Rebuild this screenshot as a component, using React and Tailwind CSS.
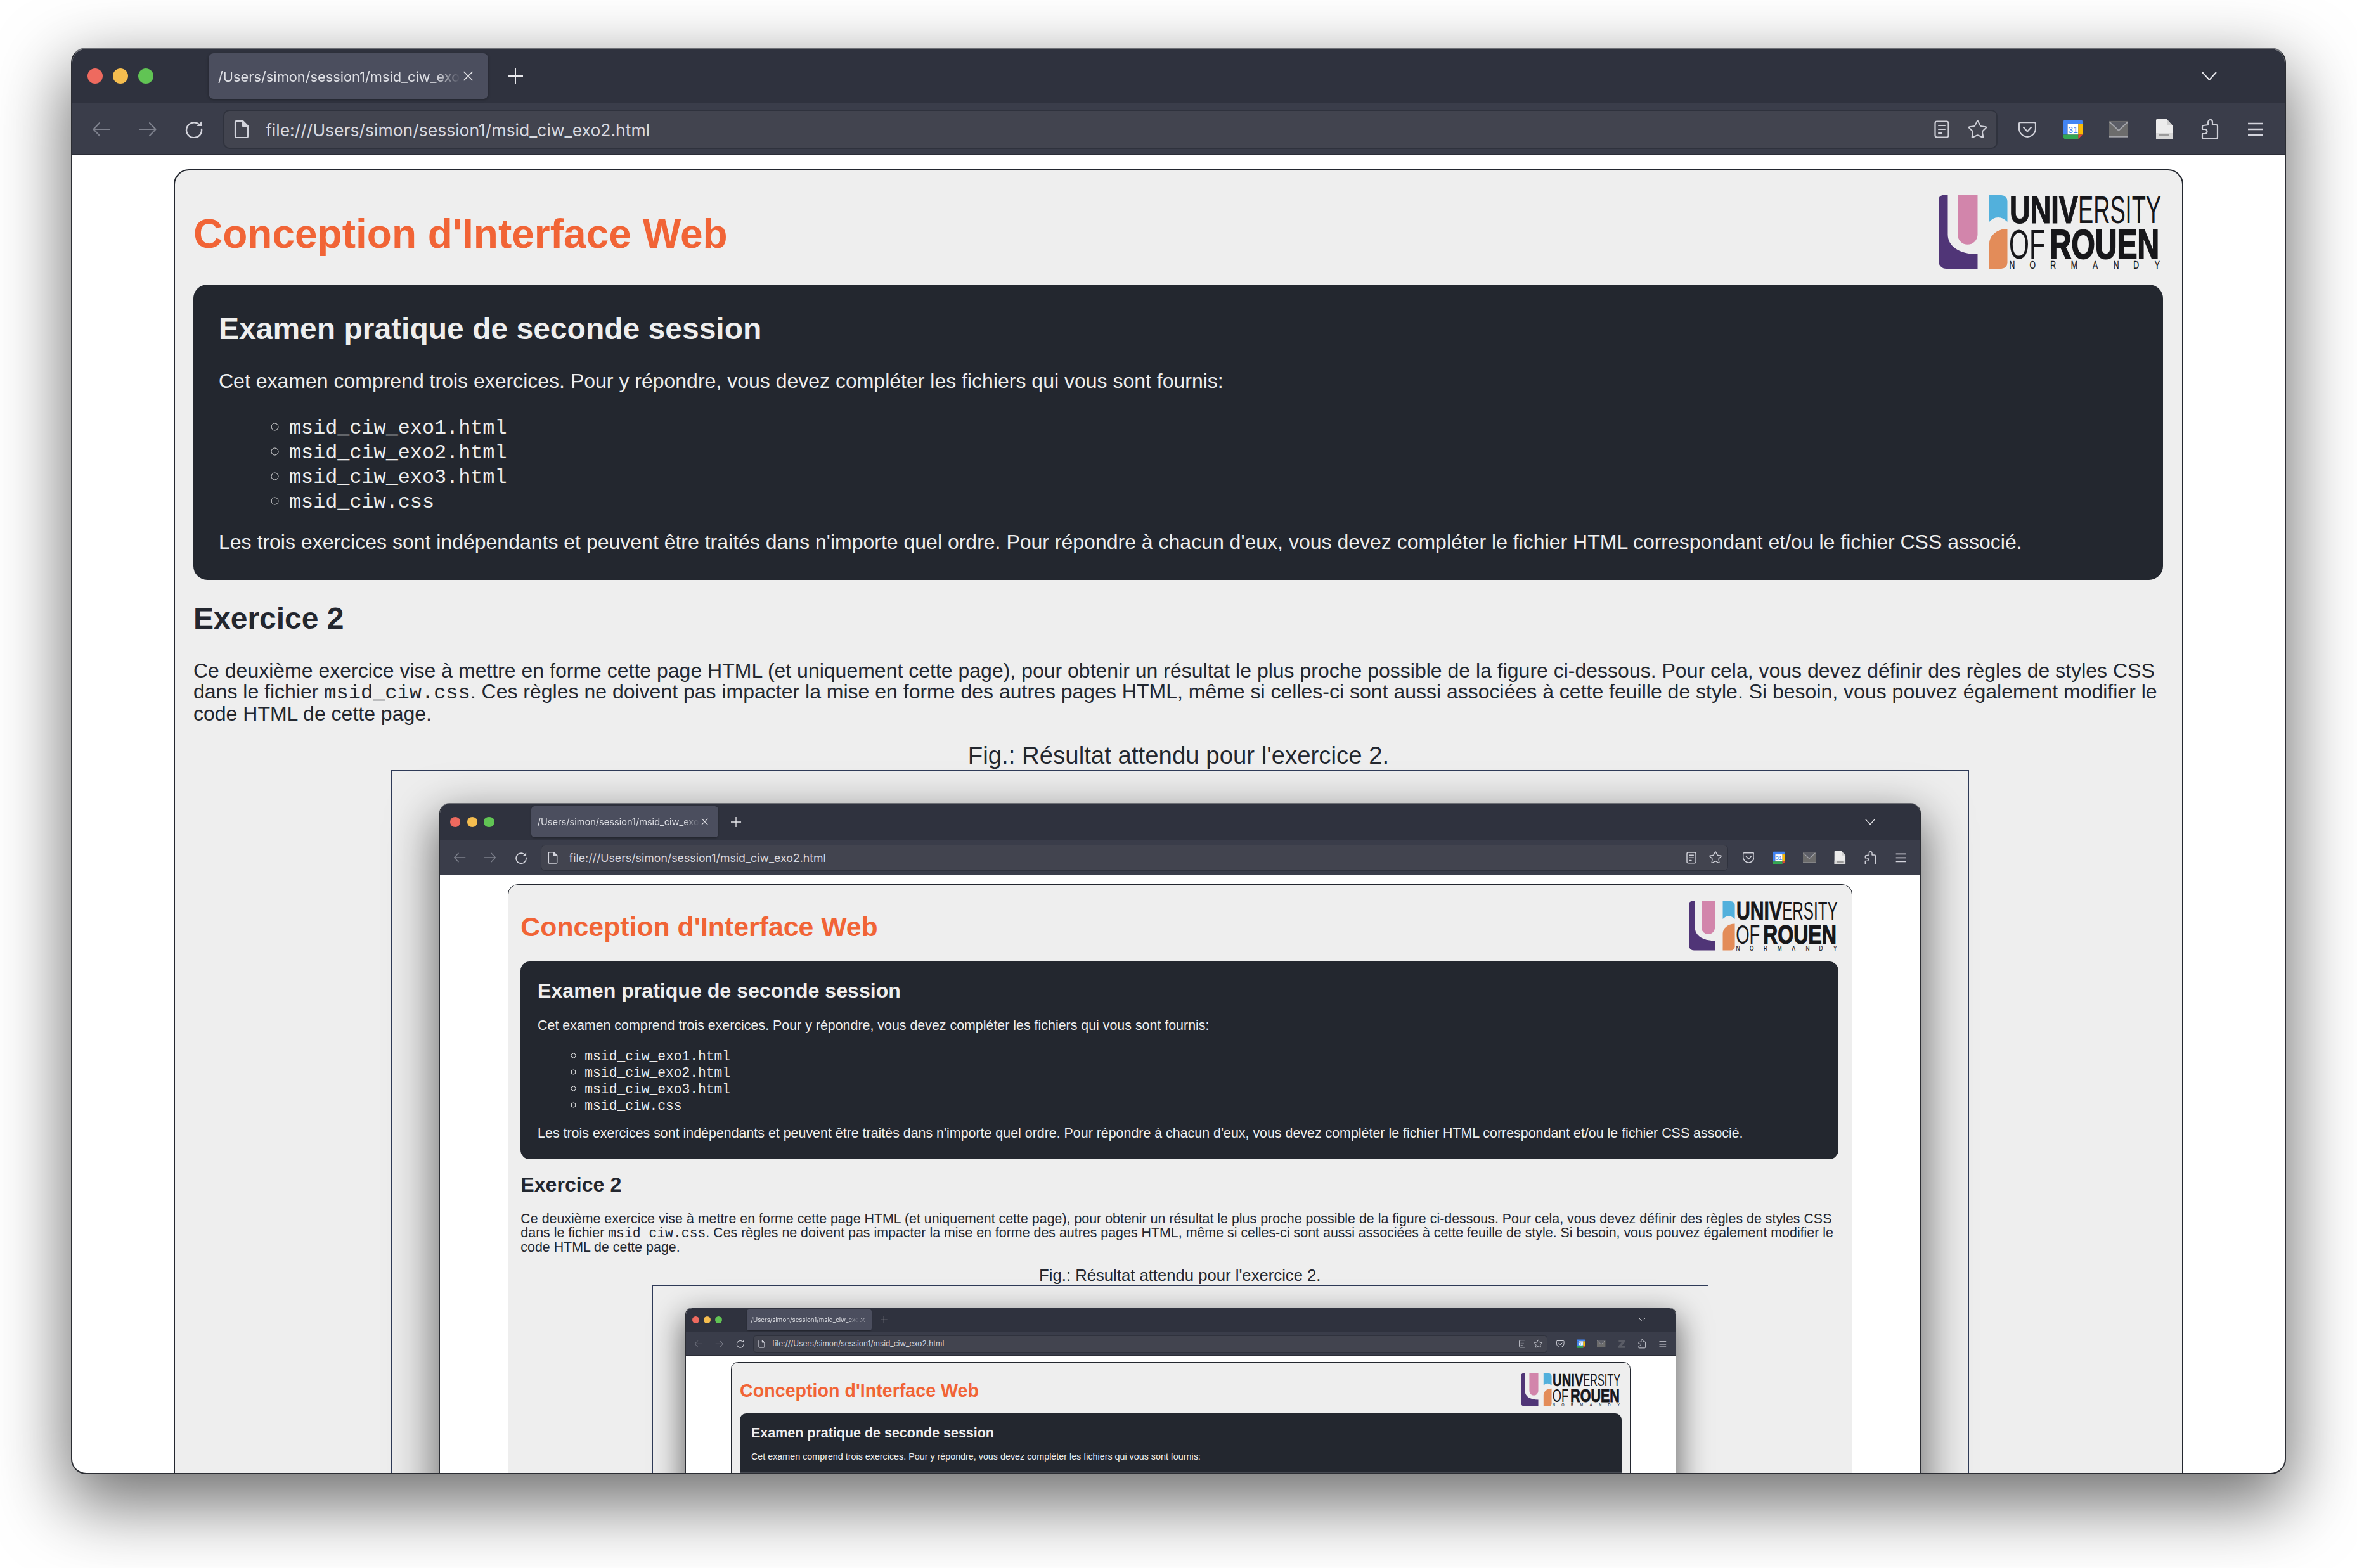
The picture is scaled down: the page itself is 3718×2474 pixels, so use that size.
import React from "react";
import { Star } from "lucide-react";

const Back = ({ flip }) => (
  <svg width="30" height="24" viewBox="0 0 30 24" fill="none" stroke="#7d808c" strokeWidth="2.2" strokeLinecap="round" strokeLinejoin="round" className={flip ? "-scale-x-100" : ""}>
    <path d="M28 12H3M12 2 2.5 12 12 22" />
  </svg>
);
const Reload = () => (
  <svg width="30" height="28" viewBox="0 0 30 28" fill="none" stroke="#d3d4dc" strokeWidth="2.4" strokeLinecap="round">
    <path d="M22 5.5A12 12 0 1 0 27 14" />
    <path d="M27 1.5V9h-7.5z" fill="#d3d4dc" stroke="none" />
  </svg>
);
const FileIcon = () => (
  <svg width="24" height="28" viewBox="0 0 24 28" fill="none" stroke="#d3d4dc" strokeWidth="2.2" strokeLinejoin="round">
    <path d="M2 3a2 2 0 0 1 2-2h10l8 8v16a2 2 0 0 1-2 2H4a2 2 0 0 1-2-2z" />
    <path d="M14 1v8h8z" fill="#d3d4dc" />
  </svg>
);
const Reader = () => (
  <svg width="24" height="28" viewBox="0 0 24 28" fill="none" stroke="#cfd0d8" strokeWidth="2.2" strokeLinecap="round">
    <rect x="1.5" y="1.5" width="21" height="25" rx="3" />
    <path d="M7 8h10M7 14h10M7 20h5" />
  </svg>
);
const Pocket = () => (
  <svg width="28" height="25" viewBox="0 0 28 25" fill="none" stroke="#cfd0d8" strokeWidth="2.2" strokeLinecap="round" strokeLinejoin="round">
    <path d="M3 1.2h22a2 2 0 0 1 2 2V11c0 7-6 12.8-13 12.8S1 18 1 11V3.2a2 2 0 0 1 2-2z" />
    <path d="m8 9 6 6.5L20 9" />
  </svg>
);
const Calendar = () => (
  <svg width="32" height="32" viewBox="0 0 32 32">
    <path d="M3 0h26a3 3 0 0 1 3 3v4H0V3a3 3 0 0 1 3-3z" fill="#4285f4" />
    <rect x="0" y="7" width="7" height="18" fill="#4285f4" />
    <rect x="7" y="7" width="18" height="18" fill="#fff" />
    <rect x="25" y="7" width="7" height="18" fill="#fbbc04" />
    <path d="M0 25h25v7H3a3 3 0 0 1-3-3z" fill="#34a853" />
    <path d="M25 25h7l-7 7z" fill="#ea4335" />
    <text x="16" y="22" textAnchor="middle" fontSize="15" fontFamily="Liberation Sans, sans-serif" fill="#4285f4">31</text>
  </svg>
);
const Mail = () => (
  <svg width="32" height="28" viewBox="0 0 32 28">
    <rect x="0" y="0" width="32" height="27" fill="#6c6c6c" />
    <path d="M0 1h32L16 16z" fill="#5b5d66" />
    <path d="M1 2 16 16 31 2" fill="none" stroke="#a3a4aa" strokeWidth="2" />
    <rect x="0" y="25.5" width="32" height="2" fill="#a3a4aa" />
  </svg>
);
const Doc = ({ dim }) =>
  dim ? (
    <svg width="28" height="32" viewBox="0 0 28 32">
      <path d="M3 2H26V9L13 24H26V31H2V24L15 9H3Z" fill="#5a5c66" />
    </svg>
  ) : (
    <svg width="28" height="32" viewBox="0 0 28 32">
      <path d="M2 0h16l9 10v20a2 2 0 0 1-2 2H3a2 2 0 0 1-2-2V1z" fill="#ececec" />
      <path d="M18 0v10h9z" fill="#cfcfcf" />
      <rect x="1" y="22" width="26" height="10" fill="#d8d8d8" />
      <rect x="6" y="23" width="16" height="4" fill="#9a9a9a" />
    </svg>
  );
const Puzzle = () => (
  <svg width="28" height="32" viewBox="0 0 28 32" fill="none" stroke="#cfd0d8" strokeWidth="2.2" strokeLinejoin="round">
    <path d="M11 9V5a4 4 0 0 1 4-4c2 0 3 2 3 4v4h6a2 2 0 0 1 2 2v17a3 3 0 0 1-3 3H3a1 1 0 0 1-1-1v-7h4a3.5 3.5 0 0 0 0-7H2v-4a2 2 0 0 1 2-2z" />
  </svg>
);
const Menu = () => (
  <svg width="26" height="22" viewBox="0 0 26 22" fill="none" stroke="#d3d4dc" strokeWidth="2.4">
    <path d="M1 2h24M1 11h24M1 20h24" />
  </svg>
);

const Logo = () => (
  <svg width="352" height="117" viewBox="0 0 352 117" className="shrink-0 mr-[3px]">
    <path d="M6 0H14.5V62C14.5 80 32 93 61.5 93V116H12A12 12 0 0 1 0 104V8A8 8 0 0 1 6 0Z" fill="#503577" />
    <path d="M30 0H61.5V62A15.75 15.75 0 0 1 30 62Z" fill="#d285ab" />
    <path d="M80 0H99A9.5 9.5 0 0 1 108.5 9.5V42C104 38 100 35 94 35C88 35 84 38 80 42Z" fill="#52b0dc" />
    <path d="M108.5 53C92 53 80 64 80 76V116H99A9.5 9.5 0 0 0 108.5 106.5Z" fill="#e38c59" />
    <g fontFamily="Liberation Sans, sans-serif" fill="#17171a" stroke="#17171a">
      <text x="112" y="44" fontSize="61" fontWeight="700" strokeWidth="1.2" textLength="108" lengthAdjust="spacingAndGlyphs">UNIV</text>
      <text x="220" y="44" fontSize="61" fontWeight="400" strokeWidth="0" textLength="131" lengthAdjust="spacingAndGlyphs">ERSITY</text>
      <text x="111" y="100" fontSize="64" fontWeight="400" strokeWidth="0" textLength="57" lengthAdjust="spacingAndGlyphs">OF</text>
      <text x="175" y="100" fontSize="64" fontWeight="700" strokeWidth="2" textLength="173" lengthAdjust="spacingAndGlyphs">ROUEN</text>
      <text transform="scale(0.72 1)" x="161 206 251 297 343 389 433 479" y="116" fontSize="17" strokeWidth="0.3" textAnchor="middle">NORMANDY</text>
    </g>
  </svg>
);

const IconBox = ({ children }) => <div className="w-[30px] flex justify-center">{children}</div>;

const Page = ({ level }) => (
  <div className="w-[3718px] h-[2474px] pl-[112px] pt-[75px] box-border font-['Liberation_Sans',Arial,sans-serif]">
    <div className="w-[3494px] h-[2251px] box-border rounded-[24px] border-2 border-[#2b2d33] border-t-[#6e7076] bg-white overflow-hidden shadow-[0_40px_110px_8px_rgba(0,0,0,0.56)] flex flex-col">
      <div className="h-[86px] shrink-0 bg-[#2f323e] border-b border-[#272a34] flex items-center pl-[24px] pr-[107px] font-['Inter',sans-serif]">
        <div className="flex gap-[16px]">
          <div className="w-[24px] h-[24px] rounded-full bg-[#ee6a5f]" />
          <div className="w-[24px] h-[24px] rounded-full bg-[#f5bd4f]" />
          <div className="w-[24px] h-[24px] rounded-full bg-[#61c454]" />
        </div>
        <div className="ml-[87px] w-[441px] h-[72px] rounded-[8px] bg-[#4b4e5e] shadow-[0_1px_4px_rgba(0,0,0,0.3)] flex items-center pl-[15px] pr-[23px] gap-[4px]">
          <div className="flex-1 pt-[3px] overflow-hidden whitespace-nowrap text-[21.8px] text-[#dfe0e5] [mask-image:linear-gradient(to_right,black_90%,transparent)]">
            /Users/simon/session1/msid_ciw_exo2.html
          </div>
          <svg width="17" height="16" viewBox="0 0 17 16" stroke="#e8e8ec" strokeWidth="1.6" fill="none" className="shrink-0">
            <path d="M1.5 1 15.5 15M15.5 1 1.5 15" />
          </svg>
        </div>
        <svg width="24" height="24" viewBox="0 0 24 24" stroke="#e8e8ec" strokeWidth="2" fill="none" className="ml-[31px] shrink-0">
          <path d="M12 0v24M0 12h24" />
        </svg>
        <div className="flex-1" />
        <svg width="24" height="14" viewBox="0 0 24 14" stroke="#e8e8ec" strokeWidth="2" fill="none" strokeLinejoin="round">
          <path d="M1 1 12 13 23 1" />
        </svg>
      </div>
      <div className="h-[82px] shrink-0 bg-[#3a3d4a] border-b-2 border-[#2b2d37] flex items-center pt-[2px] pl-[31px] pr-[31px] font-['Inter',sans-serif]">
        <div className="flex items-center gap-[43px] w-[176px]">
          <Back />
          <Back flip />
          <Reload />
        </div>
        <div className="ml-[31px] flex-1 h-[62px] box-border rounded-[10px] border-2 border-[#2f323d] bg-[#42444f] flex items-center pl-[15px] pr-[13px]">
          <FileIcon />
          <div className="ml-[26px] flex-1 pt-[3px] text-[26.5px] text-[#d8d9e0] whitespace-nowrap">file:///Users/simon/session1/msid_ciw_exo2.html</div>
          <div className="flex items-center gap-[28px]">
            <Reader />
            <Star size={33} color="#cfd0d8" strokeWidth={1.5} />
          </div>
        </div>
        <div className="ml-[32px] flex items-center gap-[42px]">
          <IconBox><Pocket /></IconBox>
          <IconBox><Calendar /></IconBox>
          <IconBox><Mail /></IconBox>
          <IconBox><Doc dim={level === 2} /></IconBox>
          <IconBox><Puzzle /></IconBox>
          <IconBox><Menu /></IconBox>
        </div>
      </div>
      <div className="flex-1 min-h-0 px-[160px] pt-[22px]">
        <div className="w-[3170px] box-border rounded-t-[24px] border-2 border-[#23272f] bg-[#eeeeee] px-[29px] pt-[39px] text-[#23272f]">
          <div className="flex items-center justify-between h-[117px] mb-[24px]">
            <h1 className="text-[64px] leading-[74px] font-bold text-[#f16436] mt-[4px]">Conception d'Interface Web</h1>
            <Logo />
          </div>
          <div className="relative w-[3107px] h-[466px] box-border rounded-[22px] bg-[#23272f] text-[#eeeeee] pl-[40px] pt-[42px]">
            <h2 className="text-[48px] leading-[56px] font-bold">Examen pratique de seconde session</h2>
            <p className="mt-[37px] text-[32px] leading-[34px]">Cet examen comprend trois exercices. Pour y répondre, vous devez compléter les fichiers qui vous sont fournis:</p>
            <ul className="mt-[36px] pl-[111px] list-[circle] marker:text-[38px] font-['Liberation_Mono',monospace] text-[31.8px] leading-[39px]">
              <li className="h-[39px]">msid_ciw_exo1.html</li>
              <li className="h-[39px]">msid_ciw_exo2.html</li>
              <li className="h-[39px]">msid_ciw_exo3.html</li>
              <li className="h-[39px]">msid_ciw.css</li>
            </ul>
            <p className="mt-[28px] text-[32px] leading-[34px]">Les trois exercices sont indépendants et peuvent être traités dans n'importe quel ordre. Pour répondre à chacun d'eux, vous devez compléter le fichier HTML correspondant et/ou le fichier CSS associé.</p>
            {level === 2 && <div className="absolute left-0 right-0 top-[208px] h-[5px] bg-[#474b53]" />}
          </div>
          <h2 className="mt-[33px] text-[48px] leading-[56px] font-bold">Exercice 2</h2>
          <p className="mt-[38px] text-[32px] leading-[32.7px]">
            Ce deuxième exercice vise à mettre en forme cette page HTML (et uniquement cette page), pour obtenir un résultat le plus proche possible de la figure ci-dessous. Pour cela, vous devez définir des règles de styles CSS
            <br />
            dans le fichier <span className="font-['Liberation_Mono',monospace]">msid_ciw.css</span>. Ces règles ne doivent pas impacter la mise en forme des autres pages HTML, même si celles-ci sont aussi associées à cette feuille de style. Si besoin, vous pouvez également modifier le
            <br />
            code HTML de cette page.
          </p>
          <div className="mt-[27px] text-center text-[38.4px] leading-[44px]">Fig.: Résultat attendu pour l'exercice 2.</div>
          {level < 2 && (
            <div className="mt-[1px] ml-[311px] w-[2490px] box-border border-2 border-[#2f3b58]">
              <div className="[zoom:0.669]">
                <Page level={level + 1} />
              </div>
            </div>
          )}
        </div>
      </div>
    </div>
  </div>
);

export default function App() {
  return (
    <div className="bg-white w-[3718px] h-[2474px] overflow-hidden">
      <Page level={0} />
    </div>
  );
}
